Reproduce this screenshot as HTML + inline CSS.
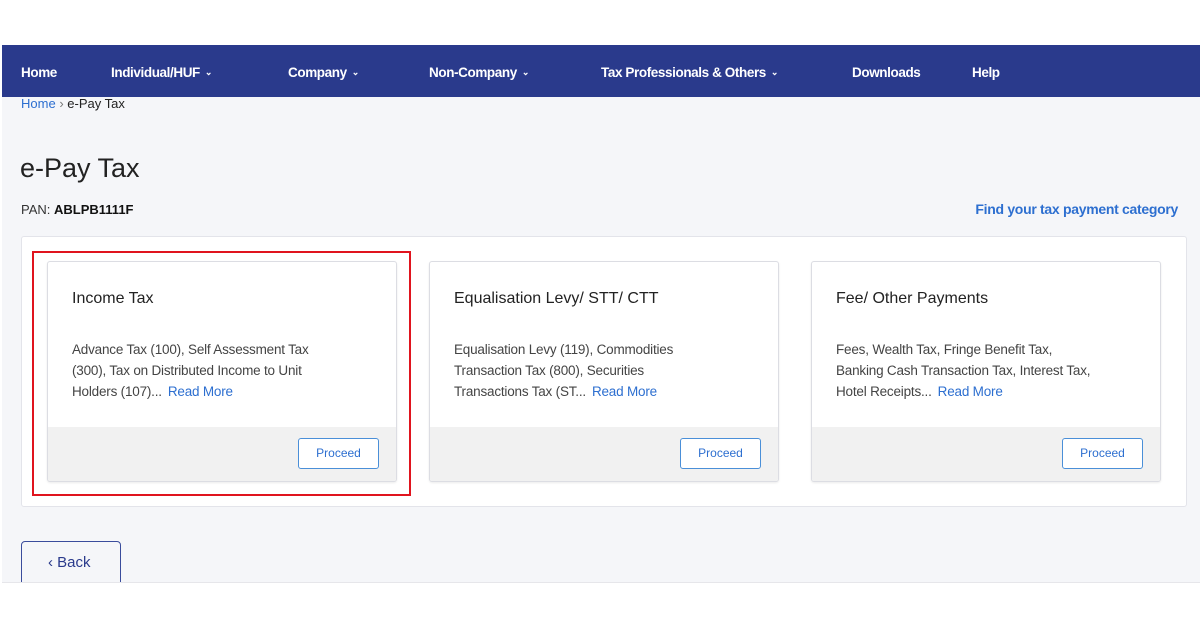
<!DOCTYPE html>
<html><head><style>
*{margin:0;padding:0;box-sizing:border-box}
body{width:1200px;height:628px;background:#fff;font-family:"Liberation Sans",sans-serif;position:relative;overflow:hidden}
.page{position:absolute;left:2px;top:45px;width:1198px;height:538px;background:#f5f6f9;overflow:hidden;border-bottom:1px solid #e6e6ea}
.nav{position:absolute;left:0;top:0;width:1198px;height:52px;background:#2a3a8c}
.nav span{position:absolute;top:20px;color:#fff;font-size:13.5px;font-weight:bold;letter-spacing:-0.4px}
.nav i{font-style:normal;font-size:9px;margin-left:5px;position:relative;top:-2px}
.abs{position:absolute}
.panel{position:absolute;left:19px;top:191px;width:1166px;height:271px;background:#fff;border:1px solid #e3e4ea;border-radius:3px}
.card{position:absolute;top:216px;width:350px;height:221px;background:#fff;border:1px solid #dcdde3;border-radius:3px;overflow:hidden;box-shadow:0 1px 2px rgba(0,0,0,.08)}
.card h3{position:absolute;left:24px;top:28px;font-size:16px;font-weight:normal;color:#222}
.card p{position:absolute;left:24px;top:77px;width:300px;font-size:13.5px;line-height:21px;color:#444;letter-spacing:-0.2px;white-space:nowrap}
.card p a{color:#2d6fd0;margin-left:6px}
.foot{position:absolute;left:0;top:165px;width:100%;height:56px;background:#f1f1f1}
.btn{position:absolute;right:17px;top:11px;width:81px;height:31px;border:1.5px solid #4a8fd8;border-radius:3px;background:#fff;color:#2d6fd0;font-size:12px;text-align:center;line-height:28px}
</style></head><body>
<div class="page">
<div class="nav">
<span style="left:19px">Home</span>
<span style="left:109px">Individual/HUF<i>⌄</i></span>
<span style="left:286px">Company<i>⌄</i></span>
<span style="left:427px">Non-Company<i>⌄</i></span>
<span style="left:599px">Tax Professionals &amp; Others<i>⌄</i></span>
<span style="left:850px">Downloads</span>
<span style="left:970px">Help</span>
</div>
<div class="abs" style="left:19px;top:51px;font-size:13px;color:#222"><span style="color:#2d6fd0">Home</span> <span style="color:#777">›</span> e-Pay Tax</div>
<div class="abs" style="left:18px;top:108px;font-size:27px;color:#222">e-Pay Tax</div>
<div class="abs" style="left:19px;top:157px;font-size:13px;color:#333">PAN: <b style="color:#111">ABLPB1111F</b></div>
<div class="abs" style="right:22px;top:156px;font-size:14px;font-weight:bold;color:#2d6fd0;letter-spacing:-0.3px">Find your tax payment category</div>
<div class="panel"></div>
<div class="abs" style="left:30px;top:206px;width:379px;height:245px;border:2px solid #e0141e"></div>
<div class="card" style="left:45px"><h3>Income Tax</h3><p>Advance Tax (100), Self Assessment Tax<br>(300), Tax on Distributed Income to Unit<br>Holders (107)...<a>Read More</a></p><div class="foot"><div class="btn">Proceed</div></div></div>
<div class="card" style="left:427px"><h3>Equalisation Levy/ STT/ CTT</h3><p>Equalisation Levy (119), Commodities<br>Transaction Tax (800), Securities<br>Transactions Tax (ST...<a>Read More</a></p><div class="foot"><div class="btn">Proceed</div></div></div>
<div class="card" style="left:809px"><h3>Fee/ Other Payments</h3><p>Fees, Wealth Tax, Fringe Benefit Tax,<br>Banking Cash Transaction Tax, Interest Tax,<br>Hotel Receipts...<a>Read More</a></p><div class="foot"><div class="btn">Proceed</div></div></div>
<div class="abs" style="left:19px;top:496px;width:100px;height:50px;border:1.5px solid #3a4c9c;border-radius:4px;color:#2a3a8c;font-size:15px;padding:12px 0 0 26px">‹ Back</div>
</div>
</body></html>
